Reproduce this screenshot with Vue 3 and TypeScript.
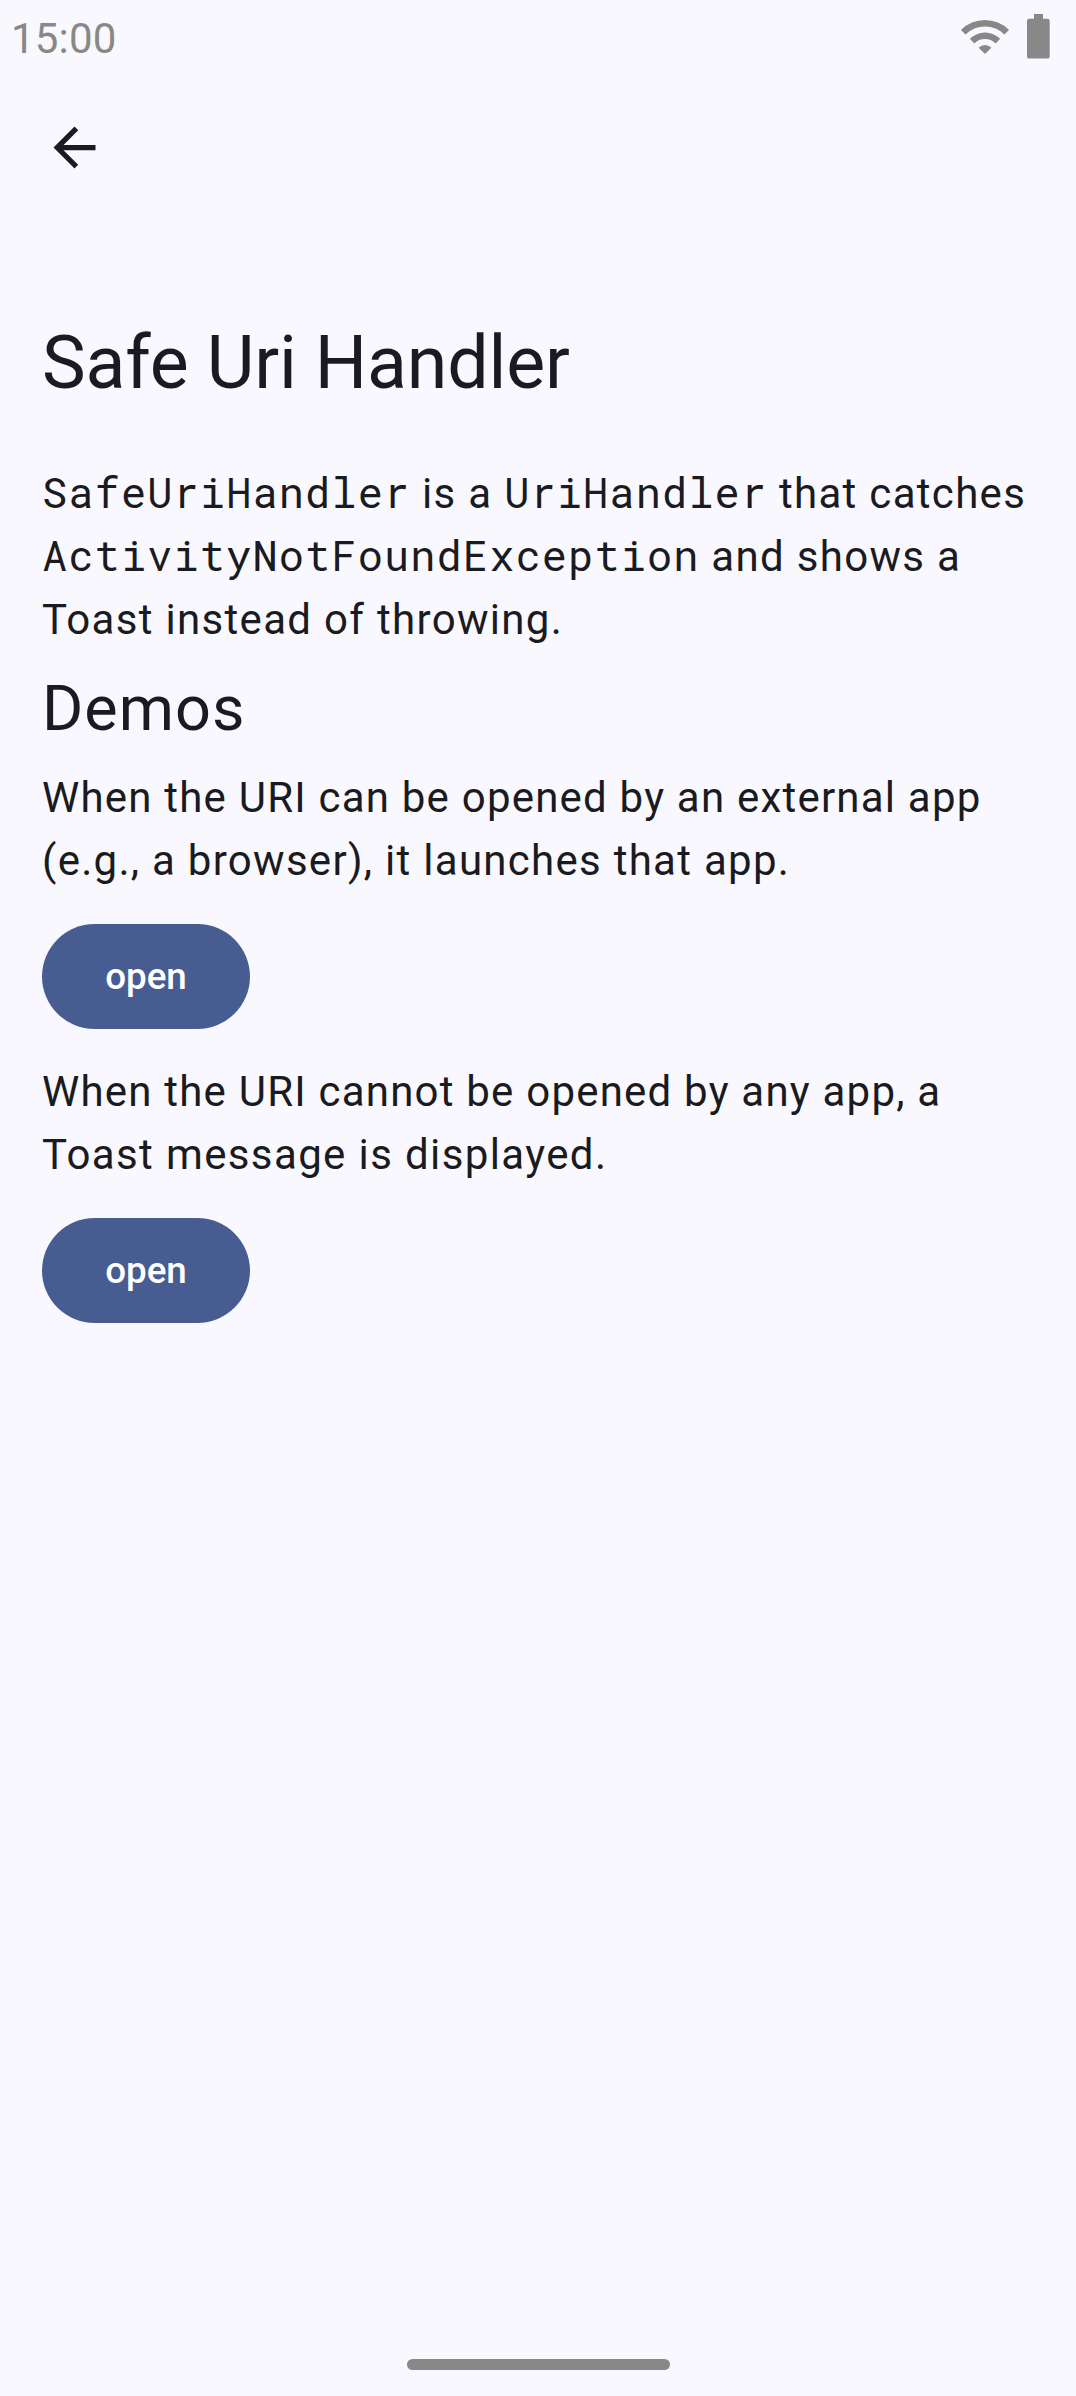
<script setup lang="ts">
interface Line {
  text: string
  tracking: number
}

interface Demo {
  id: string
  lines: Line[]
}

const demos: Demo[] = [
  {
    id: 'external',
    lines: [
      { text: 'When the URI can be opened by an external app', tracking: 1.21 },
      { text: '(e.g., a browser), it launches that app.', tracking: 1.28 },
    ],
  },
  {
    id: 'unsupported',
    lines: [
      { text: 'When the URI cannot be opened by any app, a', tracking: 1.21 },
      { text: 'Toast message is displayed.', tracking: 1.38 },
    ],
  },
]
</script>

<template>
  <div class="screen">
    <header class="status">
      <span class="time">15:00</span>
      <div class="indicators">
        <svg class="wifi" width="50" height="36" viewBox="0 0 50 36" fill="#888">
          <path d="M.96 9.96A34 34 0 0 1 49.04 9.96L44.44 14.56A27.5 27.5 0 0 0 5.56 14.56Z" />
          <path d="M9.8 18.8A21.5 21.5 0 0 1 40.2 18.8L35.6 23.4A15 15 0 0 0 14.4 23.4Z" />
          <path d="M18.64 27.64A9 9 0 0 1 31.36 27.64L25 34Z" />
        </svg>
        <svg class="battery" width="23" height="45" viewBox="0 0 23 45" fill="#888">
          <path d="M7 0H16V4.7H20.5A2.2 2.2 0 0 1 22.7 6.9V42.4A2.2 2.2 0 0 1 20.5 44.6H2.2A2.2 2.2 0 0 1 0 42.4V6.9A2.2 2.2 0 0 1 2.2 4.7H7Z" />
        </svg>
      </div>
    </header>

    <nav class="toolbar">
      <svg width="63" height="63" viewBox="0 0 24 24" fill="#1a1b20">
        <path d="M20 11H7.83l5.59-5.59L12 4l-8 8 8 8 1.41-1.41L7.83 13H20v-2z" />
      </svg>
    </nav>

    <main>
      <h1>Safe Uri Handler</h1>
      <p class="intro">
        <code>SafeUriHandler</code> is a <code>UriHandler</code> that catches<br />
        <code>ActivityNotFoundException</code> and shows a<br />
        Toast instead of throwing.
      </p>
      <h2>Demos</h2>
      <section v-for="demo in demos" :key="demo.id">
        <p>
          <span
            v-for="line in demo.lines"
            :key="line.text"
            class="line"
            :style="{ letterSpacing: line.tracking + 'px' }"
          >{{ line.text }}</span>
        </p>
        <button type="button">open</button>
      </section>
    </main>

    <footer><div class="handle"></div></footer>
  </div>
</template>

<style>
body {
  margin: 0;
  background: #faf8ff;
}
</style>

<style scoped>
.screen {
  width: 1076px;
  height: 2396px;
  box-sizing: border-box;
  display: flex;
  flex-direction: column;
  overflow: hidden;
  background: #faf8ff;
  color: #1a1b20;
  font-family: Roboto, sans-serif;
}
.status {
  height: 63px;
  flex: none;
  display: flex;
  justify-content: space-between;
  color: #888;
}
.time {
  margin: 7px 0 0 11px;
  font-size: 42px;
  line-height: 63px;
  letter-spacing: 0.2px;
}
.indicators {
  display: flex;
  align-items: flex-start;
  gap: 17px;
  margin-right: 26px;
}
.wifi {
  margin-top: 20px;
}
.battery {
  margin-top: 14px;
}
.toolbar {
  height: 168px;
  flex: none;
  box-sizing: border-box;
  padding: 53px 0 0 43px;
}
main {
  flex: 1;
  padding: 85px 42px 0;
}
h1 {
  margin: 0;
  font-size: 73.5px;
  line-height: 94px;
  font-weight: 400;
  letter-spacing: -0.17px;
}
p {
  margin: 0;
  font-size: 42px;
  line-height: 63px;
  letter-spacing: 1.3125px;
  white-space: nowrap;
}
.intro {
  margin-top: 52px;
}
code {
  font-family: "Roboto Mono", "Liberation Mono", monospace;
  font-size: 42px;
  line-height: 42px;
  letter-spacing: 1.1px;
}
h2 {
  margin: 26px 0;
  font-size: 63px;
  line-height: 63px;
  font-weight: 400;
  letter-spacing: 1px;
}
section + section {
  margin-top: 31px;
}
.line {
  display: block;
}
button {
  display: block;
  width: 208px;
  height: 105px;
  margin-top: 32px;
  padding: 0;
  border: 0;
  border-radius: 53px;
  background: #475d92;
  color: #fff;
  font: 500 36.75px/52px Roboto, sans-serif;
  letter-spacing: 0;
}
footer {
  flex: none;
  height: 37px;
  display: flex;
  justify-content: center;
}
.handle {
  width: 263px;
  height: 11px;
  border-radius: 6px;
  background: #888;
}
</style>
